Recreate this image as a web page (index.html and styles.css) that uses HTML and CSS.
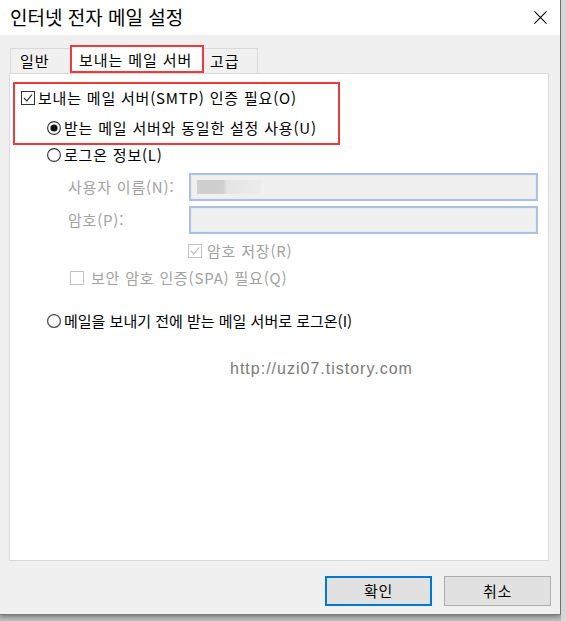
FILE: index.html
```html
<!DOCTYPE html>
<html lang="ko">
<head>
<meta charset="utf-8">
<title>인터넷 전자 메일 설정</title>
<link rel="stylesheet" href="styles.css">
</head>
<body>
<div class="screen">
  <div class="window">
    <div class="titlebar">
      <span class="title">인터넷 전자 메일 설정</span>
      <svg class="close" width="14" height="14" viewBox="0 0 14 14"><path d="M0.5 0.5 L13.5 13.5 M13.5 0.5 L0.5 13.5" stroke="#000" stroke-width="1.1" fill="none"/></svg>
    </div>
    <div class="body">
      <div class="tabs">
        <div class="tab first">일반</div>
        <div class="tab active">보내는 메일 서버</div>
        <div class="tab last">고급</div>
      </div>
      <div class="panel">
        <div class="highlight">
          <div class="row">
            <svg class="box" width="14" height="14" viewBox="0 0 14 14"><rect x="0.5" y="0.5" width="13" height="13" fill="#fff" stroke="#333"/><path d="M3 7 L5.8 9.8 L11 3.6" stroke="#333" stroke-width="1.2" fill="none"/></svg>
            <span class="label">보내는 메일 서버(SMTP) 인증 필요(O)</span>
          </div>
          <div class="row sub">
            <svg class="box" width="14" height="14" viewBox="0 0 14 14"><circle cx="7" cy="7" r="6.4" fill="#fff" stroke="#333" stroke-width="1.1"/><circle cx="7" cy="7" r="3.6" fill="#111"/></svg>
            <span class="label">받는 메일 서버와 동일한 설정 사용(U)</span>
          </div>
        </div>
        <div class="row radio-row">
          <svg class="box" width="14" height="14" viewBox="0 0 14 14"><circle cx="7" cy="7" r="6.4" fill="#fff" stroke="#333" stroke-width="1.1"/></svg>
          <span class="label">로그온 정보(L)</span>
        </div>
        <div class="fields">
          <span class="flabel">사용자 이름(N):</span>
          <div class="input"><span class="blur"></span></div>
          <span class="flabel">암호(P):</span>
          <div class="input"></div>
        </div>
        <div class="row save">
          <svg class="box" width="14" height="14" viewBox="0 0 14 14"><rect x="0.5" y="0.5" width="13" height="13" fill="#fff" stroke="#c2c2c2"/><path d="M3 7 L5.8 9.8 L11 3.6" stroke="#b8b8b8" stroke-width="1.2" fill="none"/></svg>
          <span class="label dim">암호 저장(R)</span>
        </div>
        <div class="row spa">
          <svg class="box" width="14" height="14" viewBox="0 0 14 14"><rect x="0.5" y="0.5" width="13" height="13" fill="#fff" stroke="#c2c2c2"/></svg>
          <span class="label dim">보안 암호 인증(SPA) 필요(Q)</span>
        </div>
        <div class="row radio-row logon">
          <svg class="box" width="14" height="14" viewBox="0 0 14 14"><circle cx="7" cy="7" r="6.4" fill="#fff" stroke="#555" stroke-width="1.3"/></svg>
          <span class="label">메일을 보내기 전에 받는 메일 서버로 로그온(I)</span>
        </div>
        <div class="url">http://uzi07.tistory.com</div>
      </div>
      <div class="buttons">
        <div class="btn primary">확인</div>
        <div class="btn">취소</div>
      </div>
    </div>
  </div>
  <div class="side"></div>
</div>
</body>
</html>
```

FILE: styles.css
```css
html, body {
  margin: 0;
  padding: 0;
}
body {
  width: 566px;
  height: 621px;
  overflow: hidden;
  font-family: "Noto Sans CJK KR", "Noto Sans", sans-serif;
  font-size: 15px;
  color: #000;
  background: linear-gradient(#c9c9c9, #bdbdbd);
}
.screen {
  display: flex;
  align-items: flex-start;
  height: 621px;
}
.window {
  width: 561px;
  height: 615px;
  box-sizing: border-box;
  border-right: 1px solid #6f6f6f;
  border-bottom: 1px solid #7a7a7a;
  background: #f0f0f0;
  display: flex;
  flex-direction: column;
  box-shadow: 0 2px 4px rgba(0,0,0,0.35);
}
.side {
  flex: 1;
  height: 621px;
  background: #d6d6d6;
}
.titlebar {
  height: 35px;
  background: #fff;
  display: flex;
  align-items: center;
  justify-content: space-between;
  padding: 0 13px 0 10px;
  flex-shrink: 0;
}
.title {
  font-size: 19px;
  line-height: 24px;
  margin-top: -1px;
}
.close {
  display: block;
  width: 13px;
  height: 13px;
}
.body {
  padding: 10px 9px 0 9px;
  display: flex;
  flex-direction: column;
}
.tabs {
  display: flex;
  align-items: flex-end;
  height: 28px;
  letter-spacing: 0.9px;
}
.tab {
  height: 25px;
  box-sizing: border-box;
  border: 1px solid #d9d9d9;
  border-bottom: none;
  background: #f0f0f0;
  display: flex;
  align-items: center;
  line-height: 20px;
}
.tab.first {
  margin-left: 1px;
  width: 60px;
  border-right: none;
  padding-left: 9px;
}
.tab.active {
  height: 28px;
  width: 134px;
  background: #fff;
  border: 2px solid #ee3a3a;
  padding: 1px 0 0 7px;
}
.tab.last {
  width: 54px;
  border-left: none;
  padding-left: 6px;
}
.panel {
  width: 540px;
  height: 488px;
  box-sizing: border-box;
  background: #fff;
  border: 1px solid #d9d9d9;
  display: flex;
  flex-direction: column;
  align-items: flex-start;
  letter-spacing: 0.8px;
}
.highlight {
  margin: 8px 0 0 3px;
  width: 327px;
  height: 63px;
  box-sizing: border-box;
  border: 2px solid #ee3a3a;
  padding: 0 0 1px 6px;
  display: flex;
  flex-direction: column;
  gap: 2px;
}
.row {
  display: flex;
  align-items: center;
  gap: 3px;
  height: 28px;
  line-height: 20px;
  white-space: nowrap;
}
.row .box {
  flex-shrink: 0;
}
.row.sub {
  margin-left: 26px;
}
.radio-row {
  height: 20px;
  margin-left: 37px;
}
.fields {
  margin: 8px 0 0 58px;
  display: grid;
  grid-template-columns: 121px 349px;
  grid-auto-rows: 28px;
  row-gap: 5px;
  align-items: center;
}
.flabel {
  color: #a2a2a2;
  line-height: 20px;
  white-space: nowrap;
}
.input {
  height: 28px;
  box-sizing: border-box;
  border: 2px solid #abc1de;
  background: #f0f0f0;
  box-shadow: inset 0 0 0 1px #e6ecf5;
  display: flex;
  align-items: center;
  padding-left: 6px;
}
.blur {
  width: 64px;
  height: 14px;
  background: linear-gradient(90deg, #cfcfcf 0, #cfcfcf 26px, #e4e4e4 30px, #ececec 64px);
}
.save {
  height: 20px;
  margin: 7px 0 0 178px;
  gap: 5px;
}
.spa {
  height: 20px;
  margin: 7px 0 0 60px;
}
.spa .label {
  margin-left: 4px;
}
.dim {
  color: #a2a2a2;
}
.logon {
  margin-top: 23px;
  letter-spacing: 0;
}
.url {
  margin: 28px 0 0 220px;
  font-family: "Liberation Sans", Arial, sans-serif;
  font-size: 16px;
  line-height: 20px;
  letter-spacing: 1px;
  color: #7a7a7a;
}
.buttons {
  margin-top: 15px;
  display: flex;
  justify-content: flex-end;
  gap: 12px;
}
.btn {
  width: 107px;
  height: 30px;
  box-sizing: border-box;
  border: 1px solid #adadad;
  background: #e1e1e1;
  display: flex;
  align-items: center;
  justify-content: center;
  line-height: 20px;
  letter-spacing: 0.8px;
}
.btn.primary {
  border: 2px solid #0078d7;
}
```
